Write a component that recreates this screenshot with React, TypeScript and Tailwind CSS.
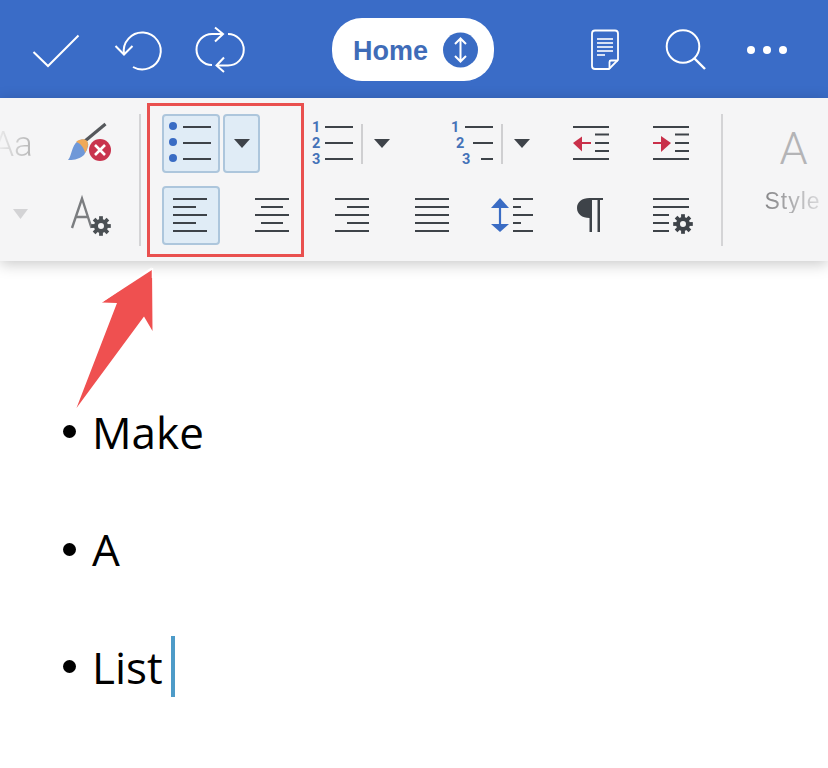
import type { ReactNode } from "react";

const INK = "#3e4349";
const BLUE = "#3a6cc4";
const RED = "#c9304a";

// every icon is drawn in page coordinates, the viewBox just crops it
function Ico({ x, y, w, h, className, children }: { x: number; y: number; w: number; h: number; className?: string; children: ReactNode }) {
  return (
    <svg width={w} height={h} viewBox={`${x} ${y} ${w} ${h}`} fill="none" className={`block shrink-0 ${className ?? ""}`}>
      {children}
    </svg>
  );
}

function Lines({ rows, color = INK, width = 2 }: { rows: [number, number, number][]; color?: string; width?: number }) {
  return (
    <>
      {rows.map(([x1, x2, y]) => (
        <line key={`${x1}-${y}`} x1={x1} x2={x2} y1={y} y2={y} stroke={color} strokeWidth={width} />
      ))}
    </>
  );
}

function Gear({ cx, cy, color = "#4b5054" }: { cx: number; cy: number; color?: string }) {
  return (
    <g>
      {[0, 45, 90, 135].map((a) => (
        <rect key={a} x={cx - 1.9} y={cy - 9.8} width={3.8} height={19.6} fill={color} transform={`rotate(${a} ${cx} ${cy})`} />
      ))}
      <circle cx={cx} cy={cy} r={5} stroke={color} strokeWidth={4} fill="#f5f5f6" />
    </g>
  );
}

function Tri({ x, y, w = 16, h = 9, color = INK }: { x: number; y: number; w?: number; h?: number; color?: string }) {
  return <polygon points={`${x},${y} ${x + w},${y} ${x + w / 2},${y + h}`} fill={color} />;
}

function Num({ x, y, n }: { x: number; y: number; n: number }) {
  return (
    <text x={x} y={y} fill="#4472b8" fontSize={14.5} className="font-['Roboto'] font-bold">
      {n}
    </text>
  );
}

function Header() {
  return (
    <div className="flex h-[98px] items-center bg-[#3a6cc7] pt-[2px] pl-[28px]">
      <Ico x={28} y={25} w={56} h={50}>
        <path d="M33.5 52 L48 66 L78.5 35.5" stroke="white" strokeWidth={2} />
      </Ico>
      <Ico x={110} y={25} w={54} h={50} className="ml-[26px]">
        <path d="M124 54 A18.5 18.5 0 1 1 133 67" stroke="white" strokeWidth={2} />
        <path d="M115.5 46 L124 54.5 L132.5 46" stroke="white" strokeWidth={2} />
      </Ico>
      <Ico x={192} y={25} w={56} h={50} className="ml-[28px]">
        <path d="M222 34 H212 A15.5 15.5 0 0 0 212 65" stroke="white" strokeWidth={2} />
        <path d="M215 27.5 L223 34 L215 41.5" stroke="white" strokeWidth={2} />
        <path d="M217 65.5 H228 A15.5 15.5 0 0 0 228 34" stroke="white" strokeWidth={2} />
        <path d="M224 57.5 L216.5 65.5 L224 72" stroke="white" strokeWidth={2} />
      </Ico>
      <div className="-mt-[1px] ml-[84px] flex h-[63px] w-[162px] items-center rounded-[30px] bg-white pl-[21px]">
        <span className="mt-[3px] font-['Liberation_Sans'] text-[27px] leading-none font-bold text-[#3f6cb8]">Home</span>
        <Ico x={444} y={32} w={36} h={36} className="ml-[15px] mt-[1px]">
          <circle cx={461.5} cy={50} r={17.5} fill={BLUE} />
          <path d="M461.5 39 V61 M456 44 L461.5 38.5 L467 44 M456 56 L461.5 61.5 L467 56" stroke="white" strokeWidth={2} />
        </Ico>
      </div>
      <Ico x={588} y={26} w={34} h={48} className="ml-[94px]">
        <path d="M595 30.5 H615 Q618 30.5 618 33.5 V60 L609 69 H595 Q592 69 592 66 V33.5 Q592 30.5 595 30.5 Z" stroke="white" strokeWidth={1.8} />
        <path d="M618 60.5 H611 Q609.5 60.5 609.5 62 V69" stroke="white" strokeWidth={1.8} />
        <Lines rows={[[597, 613, 39], [597, 613, 43], [597, 613, 47], [597, 613, 51], [597, 605, 55]]} color="white" width={1.6} />
      </Ico>
      <Ico x={660} y={25} w={50} h={50} className="ml-[38px]">
        <circle cx={683} cy={46.5} r={16.3} stroke="white" strokeWidth={2} />
        <path d="M694.5 58.5 L705 69" stroke="white" strokeWidth={2.4} />
      </Ico>
      <div className="ml-[37px] flex gap-[8px]">
        <span className="size-[8px] rounded-full bg-white" />
        <span className="size-[8px] rounded-full bg-white" />
        <span className="size-[8px] rounded-full bg-white" />
      </div>
    </div>
  );
}

function Toolbar() {
  return (
    <div className="relative z-10 flex h-[163px] items-center overflow-hidden bg-[#f5f5f6] pb-px shadow-[0_3px_14px_rgba(0,0,0,0.22)]">
      <div className="grid w-[139px] grid-cols-[52px_74px] grid-rows-[72px_72px] items-center justify-items-center">
        <span className="mt-[2px] -ml-[27px] bg-gradient-to-r from-[#f5f5f6] to-[#b4b4b4] bg-clip-text font-['Roboto'] text-[35px] leading-none font-light text-transparent">
          Aa
        </span>
        <Ico x={65} y={120} w={48} h={46}>
          <path d="M105.5 124 L85 141" stroke="#55585c" strokeWidth={3.2} />
          <path d="M68 160 C72 156 71 146 78 141 C84 137 90 141 88 148 L84 155 C78 160 72 160 68 160 Z" fill="#6f98d8" />
          <path d="M76 142 C80 138 88 138 88 144 C88 147 87 150 85 153 C84 147 80 143 76 142 Z" fill="#efa95a" />
          <circle cx={100} cy={150} r={12.5} fill="#f5f5f6" />
          <circle cx={100} cy={150} r={11} fill="#c9344e" />
          <path d="M95 145 L105 155 M105 145 L95 155" stroke="white" strokeWidth={2.6} />
        </Ico>
        <Ico x={13} y={207} w={16} h={16} className="-ml-[10px]">
          <Tri x={13} y={209} w={15} h={10} color="#d3d3d5" />
        </Ico>
        <Ico x={66} y={193} w={46} h={44}>
          <path d="M72 228 L82 198.5 L91.5 228 M76 217 H88" stroke="#7b7d80" strokeWidth={2.4} />
          <Gear cx={101} cy={226} />
        </Ico>
      </div>
      <div className="mt-[2px] h-[132px] w-[2px] bg-[#d4d4d6]" />
      <div className="ml-[10px] grid grid-cols-[repeat(7,80px)] grid-rows-[72px_72px] items-center justify-items-center">
        <div className="col-span-2 mt-[7px] flex gap-[3px] self-start justify-self-start pl-[11px]">
          <div className="flex h-[59px] w-[58px] items-center justify-center rounded-[4px] border-2 border-[#adc6dc] bg-[#e0ecf6]">
            <Ico x={168} y={121} w={46} h={45}>
              <circle cx={173} cy={126} r={4} fill={BLUE} />
              <circle cx={173} cy={142} r={4} fill={BLUE} />
              <circle cx={173} cy={158} r={4} fill={BLUE} />
              <Lines rows={[[183, 211, 127], [183, 211, 143], [183, 211, 159]]} />
            </Ico>
          </div>
          <div className="flex h-[59px] w-[37px] items-center justify-center rounded-[4px] border-2 border-[#adc6dc] bg-[#e0ecf6]">
            <Ico x={234} y={139} w={16} h={9}>
              <Tri x={234} y={139} />
            </Ico>
          </div>
        </div>
        <Ico x={311} y={116} w={80} h={54}>
          <Num x={312} y={132} n={1} />
          <Num x={312} y={148} n={2} />
          <Num x={312} y={164} n={3} />
          <Lines rows={[[325, 353, 127], [325, 353, 143], [325, 353, 159]]} />
          <line x1={362} x2={362} y1={124} y2={164} stroke="#cfcfd1" strokeWidth={2} />
          <Tri x={374} y={139} />
        </Ico>
        <Ico x={450} y={116} w={80} h={54} className="col-span-2 ml-[59px] justify-self-start">
          <Num x={451} y={132} n={1} />
          <Num x={456} y={148} n={2} />
          <Num x={462} y={164} n={3} />
          <Lines rows={[[465, 493, 127], [473, 493, 143], [481, 493, 159]]} />
          <line x1={502} x2={502} y1={124} y2={164} stroke="#cfcfd1" strokeWidth={2} />
          <Tri x={514} y={139} />
        </Ico>
        <Ico x={573} y={125} w={36} h={36}>
          <Lines rows={[[573, 609, 127], [595, 609, 134.5], [595, 609, 143], [595, 609, 151], [573, 609, 159]]} />
          <polygon points="573,143 582,136.5 582,151.5" fill={RED} />
          <line x1={581} x2={591} y1={143} y2={143} stroke={RED} strokeWidth={2} />
        </Ico>
        <Ico x={653} y={125} w={36} h={36}>
          <Lines rows={[[653, 689, 127], [675, 689, 134.5], [675, 689, 143], [675, 689, 151], [653, 689, 159]]} />
          <polygon points="671,143 661,136 661,152" fill={RED} />
          <line x1={653} x2={662} y1={143} y2={143} stroke={RED} strokeWidth={2} />
        </Ico>

        <div className="mt-[7px] flex h-[59px] w-[58px] items-center justify-center self-start rounded-[4px] border-2 border-[#adc6dc] bg-[#e0ecf6]">
          <Ico x={173} y={197} w={36} h={37}>
            <Lines rows={[[173, 207, 199], [173, 196, 207], [173, 207, 215], [173, 196, 223], [173, 207, 231]]} />
          </Ico>
        </div>
        <Ico x={253} y={197} w={36} h={36}>
          <Lines rows={[[255, 289, 199], [261, 283, 207], [255, 289, 215], [261, 283, 223], [255, 289, 231]]} />
        </Ico>
        <Ico x={333} y={197} w={36} h={36}>
          <Lines rows={[[335, 369, 199], [347, 369, 207], [335, 369, 215], [347, 369, 223], [335, 369, 231]]} />
        </Ico>
        <Ico x={413} y={197} w={36} h={36}>
          <Lines rows={[[415, 449, 199], [415, 449, 207], [415, 449, 215], [415, 449, 223], [415, 449, 231]]} />
        </Ico>
        <Ico x={489} y={197} w={44} h={36}>
          <polygon points="500,198 491,208 509,208" fill={BLUE} />
          <polygon points="500,232 491,224 509,224" fill={BLUE} />
          <line x1={500} x2={500} y1={205} y2={226} stroke={BLUE} strokeWidth={2.2} />
          <Lines rows={[[513, 533, 199], [513, 521, 207], [513, 533, 215], [513, 521, 223], [513, 533, 231]]} />
        </Ico>
        <Ico x={577} y={197} w={28} h={36}>
          <path d="M589.5 198 H603 V200 H600 V232 H597.5 V200 H592 V232 H589.5 V218 C582 218 577 214 577 208 C577 202 582 198 589.5 198 Z" fill={INK} />
        </Ico>
        <Ico x={648} y={196} w={46} h={38}>
          <Lines rows={[[653, 689, 199], [653, 689, 207], [653, 669, 215], [653, 669, 223], [653, 669, 231]]} />
          <Gear cx={683} cy={224} color={INK} />
        </Ico>
      </div>
      <div className="mt-[2px] ml-[10px] h-[132px] w-[2px] bg-[#d4d4d6]" />
      <div className="flex w-[105px] shrink-0 flex-col items-center pb-[20px] pl-[33px]">
        <span className="ml-[3px] font-['Roboto'] text-[45px] leading-none font-light text-[#b4b4b6]">A</span>
        <span className="mt-[19px] ml-[1px] bg-gradient-to-r from-[#858587] to-[#dadadc] bg-clip-text font-['Liberation_Sans'] text-[23px] leading-none tracking-[1px] text-transparent">
          Style
        </span>
      </div>
    </div>
  );
}

function Bullet({ text, caret }: { text: string; caret?: boolean }) {
  return (
    <li className="flex h-[117.5px] items-center">
      <span className="size-[13px] rounded-full bg-black" />
      <span className="ml-[16px] font-['Open_Sans'] text-[44px] leading-none text-black">{text}</span>
      {caret && <span className="ml-[8px] h-[61px] w-[4px] bg-[#4d9bc8]" />}
    </li>
  );
}

export default function App() {
  return (
    <div className="relative h-[768px] w-[828px] overflow-hidden bg-white">
      <Header />
      <Toolbar />
      <ul className="pt-[112px] pl-[63px]">
        <Bullet text="Make" />
        <Bullet text="A" />
        <Bullet text="List" caret />
      </ul>

      {/* annotation drawn over the screenshot */}
      <div className="absolute top-[103px] left-[147px] z-20 h-[154px] w-[157px] border-[3px] border-[#e9504f]" />
      <svg className="absolute top-[262px] left-[70px] z-20" width={90} height={150} viewBox="70 262 90 150">
        <polygon points="152,268 102,302.5 117,303 76.5,408 144,316.5 152.5,331" fill="#ef5050" />
        <path d="M102 301 L152 268.5" stroke="white" strokeWidth={2.5} />
        <path d="M152.5 268 V278" stroke="white" strokeWidth={1.5} />
      </svg>
    </div>
  );
}
